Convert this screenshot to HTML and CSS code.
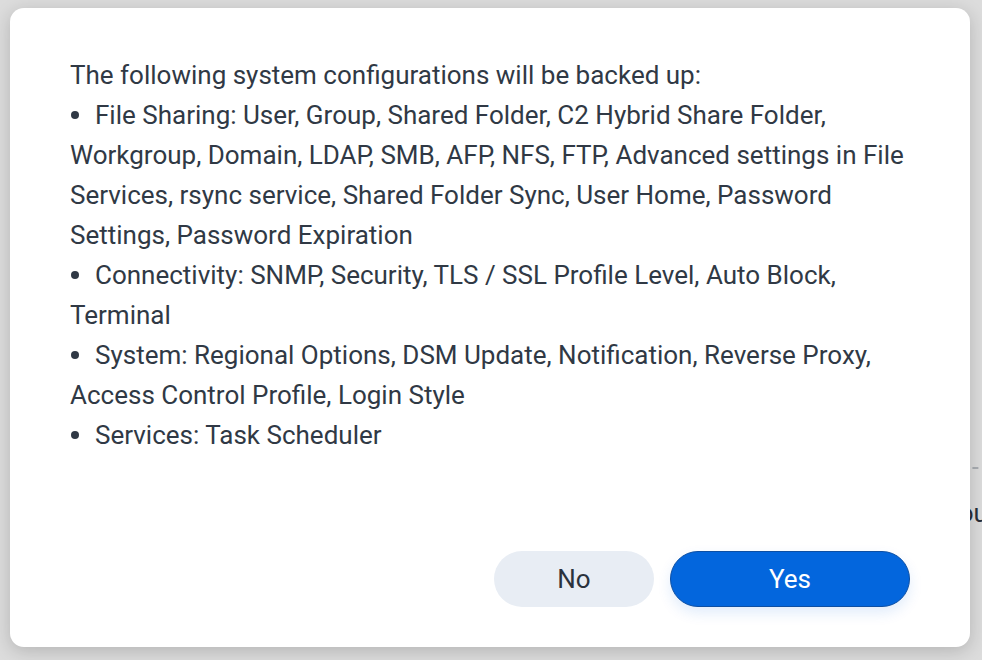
FILE: index.html
```html
<!DOCTYPE html>
<html lang="en">
<head>
<meta charset="utf-8">
<title>Backup configuration</title>
<link rel="stylesheet" href="styles.css">
</head>
<body>
<div class="backdrop-page">
  <div class="bg-rule"></div>
  <div class="bg-text">You</div>
</div>
<div class="overlay"></div>
<div class="dialog">
  <div class="dialog-body">
    <p class="intro">The following system configurations will be backed up:</p>
    <ul class="config-list">
      <li>File Sharing: User, Group, Shared Folder, C2 Hybrid Share Folder, Workgroup, Domain, LDAP, SMB, AFP, NFS, FTP, Advanced settings in File Services, rsync service, Shared Folder Sync, User Home, Password Settings, Password Expiration</li>
      <li>Connectivity: SNMP, Security, TLS / SSL Profile Level, Auto Block, Terminal</li>
      <li>System: Regional Options, DSM Update, Notification, Reverse Proxy, Access Control Profile, Login Style</li>
      <li>Services: Task Scheduler</li>
    </ul>
  </div>
  <div class="dialog-footer">
    <button class="btn btn-secondary">No</button>
    <button class="btn btn-primary">Yes</button>
  </div>
</div>
</body>
</html>
```
FILE: styles.css
```css
html, body {
  margin: 0;
  padding: 0;
  width: 982px;
  height: 660px;
  overflow: hidden;
}
body {
  background: #f4f4f4;
  font-family: Roboto, "Noto Sans", sans-serif;
  position: relative;
}
.backdrop-page {
  position: absolute;
  inset: 0;
}
.bg-rule {
  position: absolute;
  left: 940px;
  top: 467px;
  width: 60px;
  height: 0;
  border-top: 2px dashed #b9bdc3;
}
.bg-text {
  position: absolute;
  left: 944px;
  top: 498px;
  font-size: 26px;
  color: #1f2937;
}
.overlay {
  position: absolute;
  inset: 0;
  background: rgba(80, 80, 80, 0.14);
}
.dialog {
  position: absolute;
  left: 10px;
  top: 8px;
  width: 960px;
  height: 639px;
  box-sizing: border-box;
  background: #ffffff;
  border-radius: 14px;
  box-shadow: 0 4px 18px rgba(0, 0, 0, 0.18);
  display: flex;
  flex-direction: column;
  justify-content: space-between;
  padding: 47px 60px 40px 60px;
}
.dialog-body {
  color: #303945;
  font-size: 26px;
  line-height: 40px;
}
.intro {
  margin: 0;
}
.config-list {
  margin: 0;
  padding: 0;
  list-style: none;
}
.config-list li {
  position: relative;
  padding-left: 0;
  text-indent: 25px;
}
.config-list li::before {
  content: "";
  position: absolute;
  left: 1px;
  top: 16px;
  width: 8px;
  height: 8px;
  border-radius: 50%;
  background: #303945;
}
.dialog-footer {
  display: flex;
  justify-content: flex-end;
  gap: 16px;
}
.btn {
  font-family: Roboto, "Noto Sans", sans-serif;
  font-size: 26px;
  height: 56px;
  border-radius: 28px;
  cursor: pointer;
  box-sizing: border-box;
}
.btn-secondary {
  width: 160px;
  background: #e8edf4;
  color: #2b333d;
  border: none;
}
.btn-primary {
  width: 240px;
  background: #0366dd;
  color: #ffffff;
  border: 1px solid #0d4fa3;
  box-shadow: 0 6px 14px rgba(3, 102, 221, 0.12);
}
```
